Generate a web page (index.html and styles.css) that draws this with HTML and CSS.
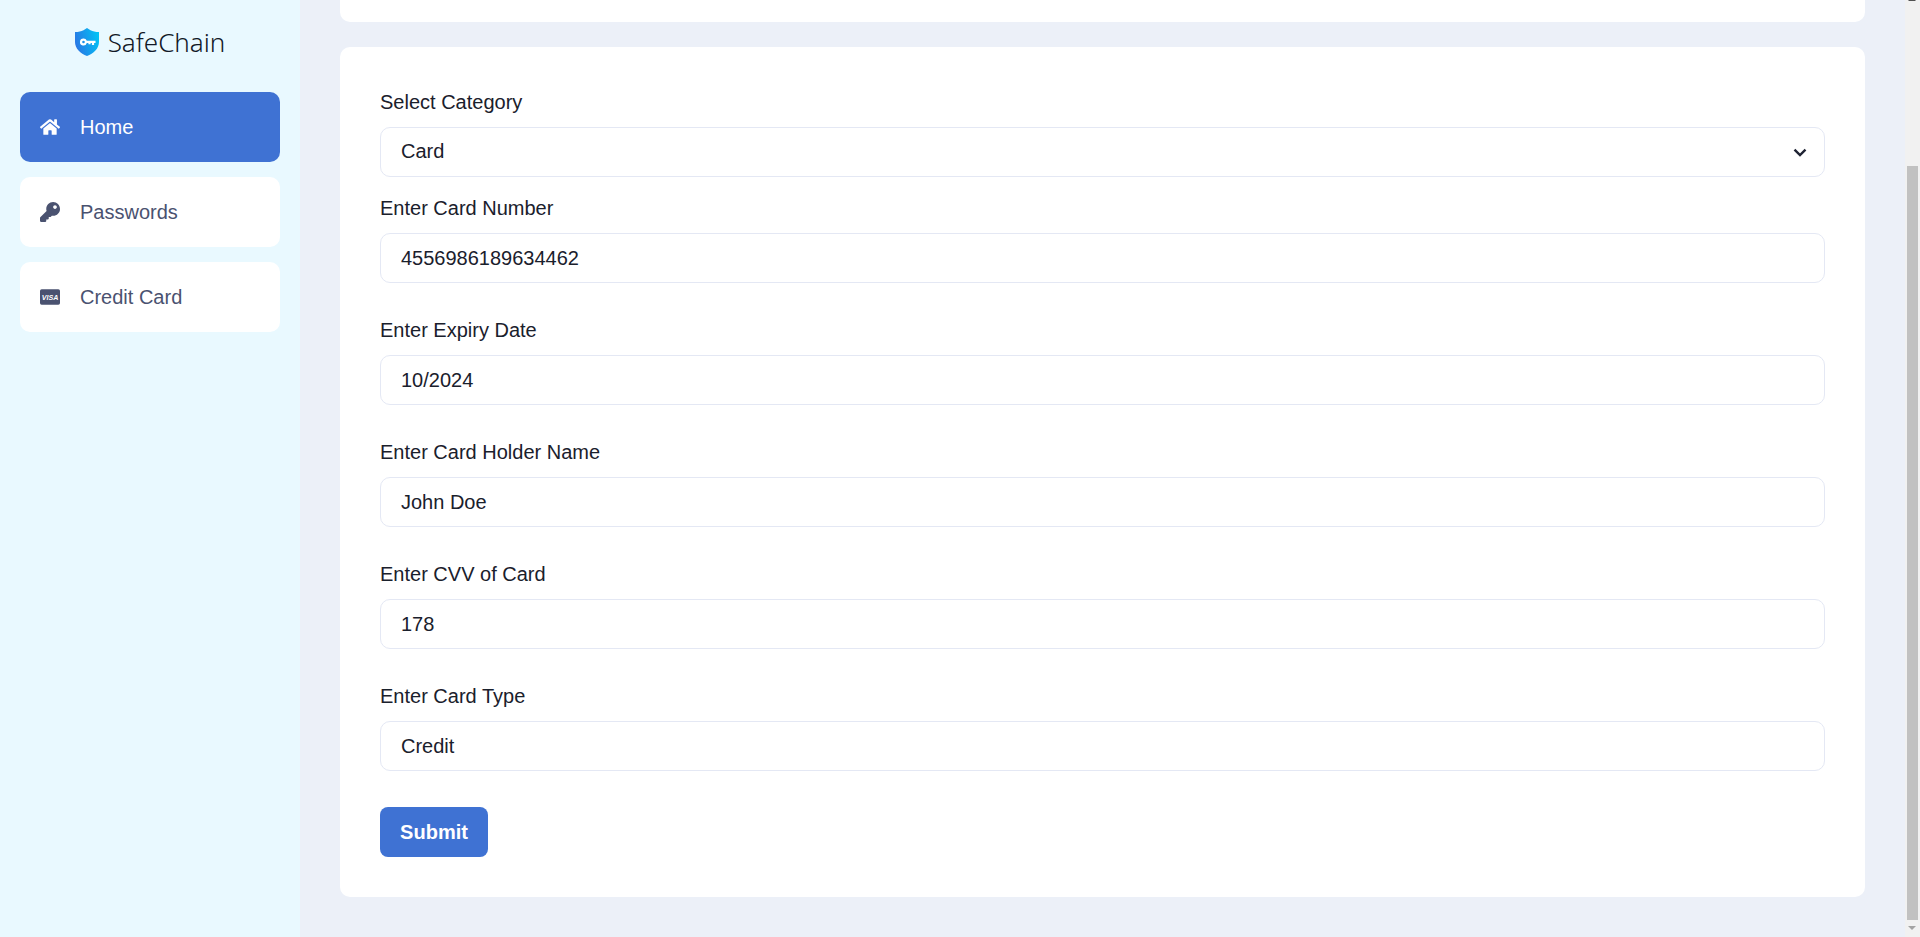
FILE: index.html
```html
<!DOCTYPE html>
<html lang="en">
<head>
<meta charset="utf-8">
<title>SafeChain</title>
<link rel="stylesheet" href="styles.css">
</head>
<body>
<div class="app">
  <aside class="sidebar">
    <div class="logo">
      <svg class="logo-mark" viewBox="0 0 24 28" width="24" height="28">
        <defs>
          <linearGradient id="sg" x1="0" y1="0.6" x2="1" y2="0.3">
            <stop offset="0" stop-color="#2a76e4"/>
            <stop offset="1" stop-color="#02c3f5"/>
          </linearGradient>
        </defs>
        <path d="M12 0 L15.500 2.200 C17.800 3.400 20.500 4 24 4 L24 14 C24 20.500 18.500 25.500 12 28 C5.500 25.500 0 20.500 0 14 L0 4 C3.500 4 6.200 3.400 8.500 2.200 Z" fill="url(#sg)"/>
        <path fill="#fff" fill-rule="evenodd" d="M8.500 10.500a3.500 3.500 0 0 1 3.300 2.200H20.500v2.300h-1.400v1.900h-2.200v-1.900h-1.300v1.200h-2.200v-1.200h-1.600a3.500 3.500 0 1 1-3.300-4.500zm0 2.200a1.300 1.300 0 1 0 0 2.600 1.300 1.300 0 0 0 0-2.600z"/>
      </svg>
      <span class="logo-text">SafeChain</span>
    </div>
    <nav class="nav">
      <a class="nav-item active">
        <svg class="nav-icon" viewBox="0 0 576 512"><path fill="currentColor" d="M280.37 148.26L96 300.11V464a16 16 0 0 0 16 16l112.06-.29a16 16 0 0 0 15.92-16V368a16 16 0 0 1 16-16h64a16 16 0 0 1 16 16v95.64a16 16 0 0 0 16 16.05L464 480a16 16 0 0 0 16-16V300L295.67 148.26a12.19 12.19 0 0 0-15.3 0zM571.6 251.47L488 182.56V44.05a12 12 0 0 0-12-12h-56a12 12 0 0 0-12 12v72.61L318.47 43a48 48 0 0 0-61 0L4.34 251.47a12 12 0 0 0-1.6 16.9l25.5 31A12 12 0 0 0 45.15 301l235.22-193.74a12.19 12.19 0 0 1 15.3 0L530.9 301a12 12 0 0 0 16.9-1.6l25.5-31a12 12 0 0 0-1.7-16.93z"/></svg>
        <span>Home</span>
      </a>
      <a class="nav-item">
        <svg class="nav-icon" viewBox="0 0 512 512"><path fill="currentColor" d="M512 176.001C512 273.203 433.202 352 336 352c-11.22 0-22.19-1.062-32.827-3.069l-24.012 27.014A23.999 23.999 0 0 1 261.223 384H224v40c0 13.255-10.745 24-24 24h-40v40c0 13.255-10.745 24-24 24H24c-13.255 0-24-10.745-24-24v-78.059c0-6.365 2.529-12.47 7.029-16.971l161.802-161.802C163.108 213.814 160 195.271 160 176 160 78.798 238.797.001 335.999 0 433.488-.001 512 78.511 512 176.001zM336 128c0 26.51 21.49 48 48 48s48-21.49 48-48-21.49-48-48-48-48 21.49-48 48z"/></svg>
        <span>Passwords</span>
      </a>
      <a class="nav-item">
        <svg class="nav-icon" viewBox="0 0 576 512"><rect x="0" y="32" width="576" height="448" rx="48" fill="currentColor"/><text class="visa-text" x="288" y="345" text-anchor="middle">VISA</text></svg>
        <span>Credit Card</span>
      </a>
    </nav>
  </aside>
  <main class="main">
    <div class="card card-top"></div>
    <section class="card card-form">
      <form class="form">
        <label class="label">Select Category</label>
        <div class="field select-field">
          <span>Card</span>
          <svg class="chevron" viewBox="0 0 16 16" width="16" height="16"><path d="M2.500 5.600 8 11 13.500 5.600" fill="none" stroke="#1f2333" stroke-width="2.400"/></svg>
        </div>
        <label class="label">Enter Card Number</label>
        <input class="field input" value="4556986189634462">
        <label class="label">Enter Expiry Date</label>
        <input class="field input" value="10/2024">
        <label class="label">Enter Card Holder Name</label>
        <input class="field input" value="John Doe">
        <label class="label">Enter CVV of Card</label>
        <input class="field input" value="178">
        <label class="label">Enter Card Type</label>
        <input class="field input" value="Credit">
        <button class="submit" type="button">Submit</button>
      </form>
    </section>
  </main>
  <div class="scrollbar">
    <div class="arrow arrow-up"></div>
    <div class="track"><div class="thumb"></div></div>
    <div class="arrow arrow-down"></div>
  </div>
</div>
</body>
</html>
```
FILE: styles.css
```css
* { box-sizing: border-box; }
html, body { margin: 0; height: 100%; overflow: hidden; }
body { font-family: "Liberation Sans", Arial, sans-serif; color: #1a202c; }
.app { display: flex; height: 937px; background: #ecf0f8; }
.sidebar { width: 300px; flex: none; background: #e9f9ff; padding: 27px 20px 0; }
.logo { display: flex; align-items: center; justify-content: center; gap: 9px; height: 30px; margin-bottom: 35px; }
.logo-mark { flex: none; }
.logo-text { font-family: "Noto Sans", sans-serif; font-weight: 300; font-size: 26px; color: #111827; }
.nav { display: flex; flex-direction: column; gap: 15px; }
.nav-item { display: flex; align-items: center; height: 70px; padding: 0 20px; background: #fff; border-radius: 10px; color: #4a5270; font-size: 20px; }
.nav-item.active { background: #3f72d3; color: #fff; }
.nav-icon { width: 20px; height: 20px; flex: none; margin-right: 20px; }
.visa-text { font: italic bold 205px "Liberation Sans", Arial, sans-serif; fill: #fff; }
.main { flex: 1; min-width: 0; padding: 0 40px; display: flex; flex-direction: column; gap: 25px; }
.card { background: #fff; border-radius: 10px; }
.card-top { height: 22px; border-radius: 0 0 10px 10px; flex: none; }
.card-form { height: 850px; padding: 40px; flex: none; }
.form { display: flex; flex-direction: column; align-items: flex-start; }
.label { font-size: 20px; line-height: 30px; height: 30px; margin-bottom: 10px; color: #1a202c; }
.field { width: 100%; height: 50px; border: 1px solid #e4e8f4; border-radius: 10px; background: #fff; font: 20px "Liberation Sans", Arial, sans-serif; color: #1a202c; padding: 0 20px; }
.input { margin-bottom: 32px; outline: none; }
.select-field { display: flex; align-items: center; justify-content: space-between; padding: 0 16px 2px 20px; margin-bottom: 16px; }
.chevron { margin-top: 2px; }
.submit { margin-top: 4px; width: 108px; height: 50px; border: 0; border-radius: 8px; background: #3f72d3; color: #fff; font: bold 20px "Liberation Sans", Arial, sans-serif; padding: 0; }
.scrollbar { width: 15px; flex: none; background: #f1f1f1; display: flex; flex-direction: column; }
.arrow { height: 17px; flex: none; position: relative; }
.arrow::after { content: ""; position: absolute; left: 3px; border-left: 4px solid transparent; border-right: 4px solid transparent; }
.arrow-up::after { top: -3px; border-bottom: 4px solid #505050; }
.arrow-down::after { top: 6px; border-top: 4px solid #a3a3a3; }
.track { flex: 1; padding: 149px 2px 0; }
.thumb { height: 100%; background: #c1c1c1; }
```
